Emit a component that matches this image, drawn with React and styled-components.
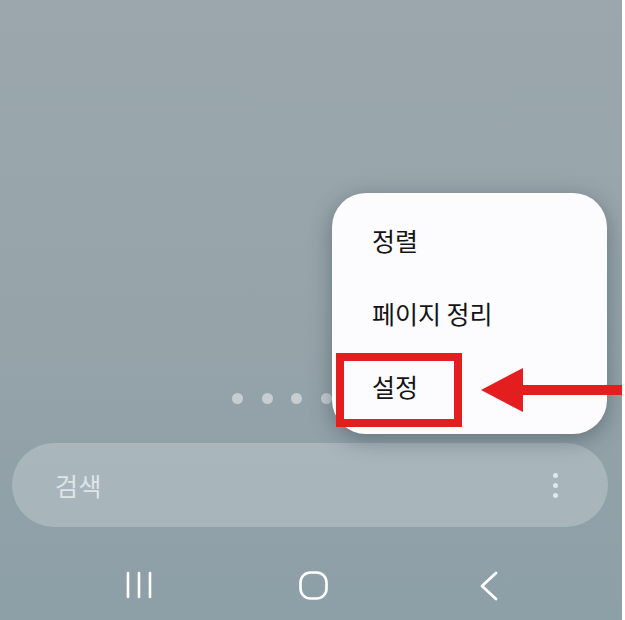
import React from 'react';
import styled, { createGlobalStyle } from 'styled-components';

const GlobalStyle = createGlobalStyle`
	html, body {
		margin: 0;
		padding: 0;
		background: #ffffff;
	}
	body {
		font-family: 'Noto Sans CJK KR', 'Noto Sans', sans-serif;
	}
`;

const Screen = styled.div`
	position: relative;
	width: 622px;
	height: 620px;
	overflow: hidden;
	display: flex;
	flex-direction: column;
	background: linear-gradient(180deg, #9ba7ad 0%, #97a4aa 45%, #8d9fa7 100%);
`;

const Spacer = styled.div`
	flex: 1;
`;

const PageDots = styled.div`
	display: flex;
	justify-content: center;
	gap: 18.5px;
	padding-left: 1px;
	height: 11px;
	margin-bottom: 39px;
`;

const Dot = styled.span`
	width: 11px;
	height: 11px;
	border-radius: 50%;
	background: #c6ced2;
`;

const SearchBar = styled.div`
	margin: 0 14px 0 12px;
	height: 84px;
	border-radius: 42px;
	background: rgba(178, 190, 195, 0.72);
	display: flex;
	align-items: center;
	justify-content: space-between;
	padding: 0 50px 0 43px;
`;

const SearchLabel = styled.span`
	font-size: 25px;
	color: #dfe4e8;
	letter-spacing: 0.5px;
`;

const Kebab = styled.span`
	display: flex;
	flex-direction: column;
	gap: 5px;
	& > i {
		width: 5px;
		height: 5px;
		border-radius: 50%;
		background: #e2e7ea;
	}
`;

const NavBar = styled.div`
	height: 93px;
	display: grid;
	grid-template-columns: repeat(3, 175px);
	justify-content: center;
	align-items: start;
	padding: 44px 0 0 5px;
	box-sizing: border-box;
`;

const NavSlot = styled.div`
	display: flex;
	justify-content: center;
`;

const Menu = styled.div`
	position: absolute;
	left: 332px;
	top: 193px;
	width: 275px;
	height: 241px;
	box-sizing: border-box;
	padding-top: 10px;
	border-radius: 34px;
	background: #fcfcfe;
	box-shadow: 0 6px 22px rgba(45, 60, 70, 0.45);
`;

const MenuItem = styled.div`
	position: relative;
	height: 73px;
	display: flex;
	align-items: center;
	padding-left: 40px;
	font-size: 25px;
	color: #141414;
`;

const Highlight = styled.span`
	position: absolute;
	left: 4px;
	top: 4px;
	width: 126px;
	height: 74px;
	box-sizing: border-box;
	border: 8px solid #e41d1f;
`;

const Arrow = styled.svg`
	position: absolute;
	left: 480px;
	top: 366px;
`;

const menuItems = ['정렬', '페이지 정리', '설정'];

const App = () => (
	<>
		<GlobalStyle />
		<Screen>
			<Spacer />
			<PageDots>
				{[0, 1, 2, 3, 4, 5].map((i) => (
					<Dot key={i} />
				))}
			</PageDots>
			<SearchBar>
				<SearchLabel>검색</SearchLabel>
				<Kebab>
					<i />
					<i />
					<i />
				</Kebab>
			</SearchBar>
			<NavBar>
				<NavSlot>
					<svg width="26" height="28" viewBox="0 0 26 28">
						<g stroke="#ffffff" strokeWidth="2.6" strokeLinecap="round">
							<line x1="2" y1="2" x2="2" y2="26" />
							<line x1="13" y1="2" x2="13" y2="26" />
							<line x1="24" y1="2" x2="24" y2="26" />
						</g>
					</svg>
				</NavSlot>
				<NavSlot>
					<svg width="29" height="29" viewBox="0 0 29 29">
						<rect x="1.5" y="1.5" width="26" height="26" rx="10" fill="none" stroke="#ffffff" strokeWidth="2.6" />
					</svg>
				</NavSlot>
				<NavSlot>
					<svg width="20" height="30" viewBox="0 0 20 30">
						<polyline points="17,2 3,15 17,28" fill="none" stroke="#ffffff" strokeWidth="2.8" strokeLinecap="round" strokeLinejoin="round" />
					</svg>
				</NavSlot>
			</NavBar>
			<Menu>
				{menuItems.map((label, i) => (
					<MenuItem key={label}>
						{i === 2 && <Highlight />}
						{label}
					</MenuItem>
				))}
			</Menu>
			<Arrow width="145" height="48" viewBox="0 0 145 48">
				<polygon points="1,24 43,2 43,46" fill="#e41d1f" />
				<rect x="40" y="19" width="105" height="10" fill="#e41d1f" />
			</Arrow>
		</Screen>
	</>
);

export default App;
